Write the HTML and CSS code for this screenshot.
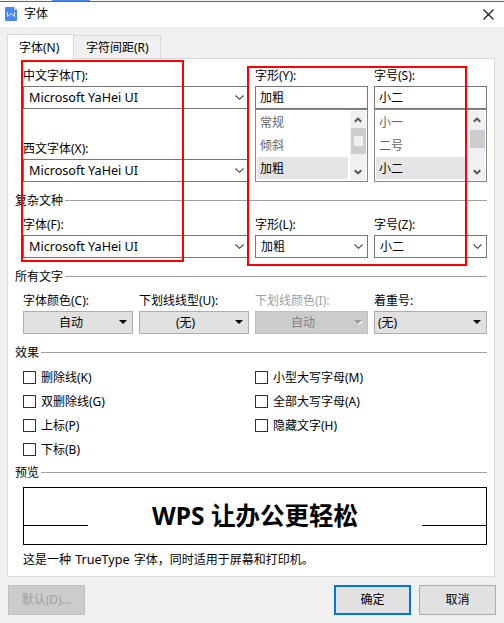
FILE: index.html
```html
<!DOCTYPE html>
<html lang="zh-CN">
<head>
<meta charset="utf-8">
<title>字体</title>
<link rel="stylesheet" href="styles.css">
</head>
<body>
<div class="window">
  <div class="top-edge"><span class="top-accent"></span></div>
  <header class="titlebar">
    <svg class="logo" width="12" height="14" viewBox="0 0 12 14"><path d="M1 0H9L12 3V13Q12 14 11 14H1Q0 14 0 13V1Q0 0 1 0Z" fill="#4a86f0"/><path d="M9 0L12 3H9Z" fill="#b5cffb"/><path d="M2.500 5V9.500L6 6.500L9.500 9.500V5" fill="none" stroke="#dce9ff" stroke-width="1"/></svg>
    <h1>字体</h1>
    <svg class="close" width="11" height="11" viewBox="0 0 11 11"><path d="M.5 .5L10.500 10.500M10.500 .5L.5 10.500" stroke="#111" stroke-width="1.1"/></svg>
  </header>
  <nav class="tabs">
    <span class="tab active">字体(N)</span>
    <span class="tab">字符间距(R)</span>
  </nav>
  <main class="panel">
    <section class="grid">
      <div class="col wide">
        <label>中文字体(T):</label>
        <div class="field font"><span>Microsoft YaHei UI</span><svg class="chev" viewBox="0 0 9 5"><path d="M.5 .5L4.500 4.300L8.500 .5"/></svg></div>
        <label class="second">西文字体(X):</label>
        <div class="field font"><span>Microsoft YaHei UI</span><svg class="chev" viewBox="0 0 9 5"><path d="M.5 .5L4.500 4.300L8.500 .5"/></svg></div>
      </div>
      <div class="col">
        <label>字形(Y):</label>
        <div class="field edit">加粗</div>
        <div class="list">
          <ul><li>常规</li><li>倾斜</li><li class="selected">加粗</li></ul>
          <div class="scroll"><svg class="arrow" viewBox="0 0 8 6"><path d="M.8 4.800L4 1.600L7.200 4.800"/></svg><div class="thumb grip"></div><svg class="arrow down" viewBox="0 0 8 6"><path d="M.8 1.200L4 4.400L7.200 1.200"/></svg></div>
        </div>
      </div>
      <div class="col">
        <label>字号(S):</label>
        <div class="field edit">小二</div>
        <div class="list">
          <ul><li>小一</li><li>二号</li><li class="selected">小二</li></ul>
          <div class="scroll"><svg class="arrow" viewBox="0 0 8 6"><path d="M.8 4.800L4 1.600L7.200 4.800"/></svg><div class="thumb short"></div><svg class="arrow down" viewBox="0 0 8 6"><path d="M.8 1.200L4 4.400L7.200 1.200"/></svg></div>
        </div>
      </div>
    </section>

    <h2>复杂文种</h2>
    <section class="grid">
      <div class="col wide"><label>字体(F):</label><div class="field font"><span>Microsoft YaHei UI</span><svg class="chev" viewBox="0 0 9 5"><path d="M.5 .5L4.500 4.300L8.500 .5"/></svg></div></div>
      <div class="col"><label>字形(L):</label><div class="field"><span>加粗</span><svg class="chev" viewBox="0 0 9 5"><path d="M.5 .5L4.500 4.300L8.500 .5"/></svg></div></div>
      <div class="col"><label>字号(Z):</label><div class="field"><span>小二</span><svg class="chev" viewBox="0 0 9 5"><path d="M.5 .5L4.500 4.300L8.500 .5"/></svg></div></div>
    </section>

    <h2>所有文字</h2>
    <section class="grid">
      <div class="col"><label>字体颜色(C):</label><div class="drop"><span>自动</span><i></i></div></div>
      <div class="col"><label>下划线线型(U):</label><div class="drop none"><span>(无)</span><i></i></div></div>
      <div class="col off"><label>下划线颜色(I):</label><div class="drop"><span>自动</span><i></i></div></div>
      <div class="col"><label>着重号:</label><div class="drop start"><span>(无)</span><i></i></div></div>
    </section>

    <h2>效果</h2>
    <section class="checks">
      <div><p><b></b>删除线(K)</p><p><b></b>双删除线(G)</p><p><b></b>上标(P)</p><p><b></b>下标(B)</p></div>
      <div><p><b></b>小型大写字母(M)</p><p><b></b>全部大写字母(A)</p><p><b></b>隐藏文字(H)</p></div>
    </section>

    <h2>预览</h2>
    <section class="preview"><hr><strong>WPS 让办公更轻松</strong><hr></section>
    <p class="info">这是一种 <span>TrueType</span> 字体，同时适用于屏幕和打印机。</p>
  </main>
  <footer>
    <div class="btn disabled">默认(D)...</div>
    <div class="btn primary">确定</div>
    <div class="btn">取消</div>
  </footer>
  <div class="mark mark-left"></div>
  <div class="mark mark-right"></div>
</div>
</body>
</html>
```
FILE: styles.css
```css
* { box-sizing: border-box; margin: 0; padding: 0; }
body {
  width: 504px; height: 623px; overflow: hidden;
  font: 12px/16px "Noto Sans", "Noto Sans CJK SC", sans-serif;
  color: #000; background: #f0f0f0;
}
.window { position: relative; height: 623px; }
.top-edge { height: 2px; padding-left: 52px; background: #f4f4f4; border-bottom: 1px solid #666; }
.top-accent { display: block; width: 38px; height: 1px; background: #4a86f0; }
.titlebar { display: flex; align-items: center; height: 25px; padding: 0 10px 1px 5px; background: #fff; }
.titlebar h1 { flex: 1; margin-left: 7px; font-size: 12px; font-weight: 400; }
.tabs { display: flex; align-items: flex-end; height: 31px; padding-left: 7px; }
.tab { height: 23px; width: 87px; border: 1px solid #d9d9d9; border-left: 0; border-bottom: 0; padding: 4px 0 0 12px; }
.tab.active { position: relative; width: 67px; height: 25px; margin-bottom: -1px; padding: 5px 0 0 11px; border-left: 1px solid #d9d9d9; background: #fff; }
.panel { width: 488px; height: 519px; margin-left: 7px; padding: 8px 7px 0; border: 1px solid #d9d9d9; background: #fff; }
.grid { display: grid; grid-template-columns: 110px 110px 113px 113px; column-gap: 6px; padding-left: 8px; }
.col { display: flex; flex-direction: column; }
.wide { grid-column: span 2; }
label { height: 16px; margin-bottom: 3px; line-height: 18px; white-space: nowrap; }
.second { margin-top: 31px; }
.field { display: flex; align-items: center; justify-content: space-between; height: 23px; padding: 0 4px 0 5px; border: 1px solid #767676; }
.font { font-size: 12.6px; }
.edit { padding-left: 4px; }
.chev { width: 9px; height: 5px; fill: none; stroke: #444; stroke-width: 1.1; }
.list { display: flex; height: 73px; border: 1px solid #828790; padding: 1px; }
ul { list-style: none; flex: none; width: 91px; margin-right: 2px; color: #666; }
li { height: 23px; padding-left: 3px; line-height: 24px; }
li.selected { height: 22px; line-height: 23px; color: #000; background: #e5e5e5; }
.scroll { display: flex; flex-direction: column; align-items: center; width: 16px; height: 69px; background: #f0f0f0; }
.arrow { width: 8px; height: 6px; margin-top: 6px; fill: none; stroke: #555; stroke-width: 2; flex: none; }
.arrow.down { margin: auto 0 5px; }
.thumb { width: 15px; height: 26px; margin-top: 5px; background: #cdcdcd; }
.grip { border: solid #cdcdcd; border-width: 8px 3px; background: #f0f0f0; }
.short { height: 18px; margin-top: 7px; }
h2 { display: flex; align-items: center; gap: 2px; width: 472px; height: 16px; margin: 11px 0 7px; font-size: 12px; line-height: 18px; font-weight: 400; }
h2::after { content: ""; flex: 1; height: 1px; margin-top: -1px; background: #a0a0a0; }
.drop { display: flex; align-items: center; justify-content: space-between; height: 23px; padding: 0 5px 0 35px; border: 1px solid #adadad; background: #e1e1e1; }
.drop.none { padding-left: 36px; }
.drop.start { padding-left: 3px; }
.drop i { border: solid transparent; border-width: 4px 4px 0; border-top-color: #000; margin-top: -1px; }
.off label { color: #a0a0a0; }
.off .drop { color: #838383; background: #ccc; border-color: #bfbfbf; }
.off .drop i { border-top-color: #999; filter: drop-shadow(1px 1px 0 #fff); }
.checks { display: grid; grid-template-columns: 226px 226px; column-gap: 6px; padding-left: 8px; height: 96px; margin-top: -2px; }
.checks p { display: flex; align-items: center; gap: 5px; height: 24px; }
.checks b { width: 13px; height: 13px; margin-bottom: 1px; border: 1px solid #333; }
.checks + h2 { margin: 3px 0 6px; }
.preview { display: flex; justify-content: space-between; width: 464px; height: 58px; margin-left: 8px; border: 1px solid #000; }
.preview hr { width: 64px; height: 1px; margin-top: 37px; border: 0; background: #000; }
.preview strong { font-size: 24.5px; line-height: 56px; white-space: nowrap; }
.info { margin: 7px 0 0 8px; white-space: nowrap; word-spacing: 1px; }
.info span { font-size: 12.6px; }
footer { display: flex; gap: 8px; padding: 8px 8px 0; }
.btn { width: 77px; height: 30px; border: 1px solid #adadad; background: #e1e1e1; text-align: center; line-height: 28px; }
.btn.primary { border: 2px solid #0078d7; line-height: 26px; }
.btn.disabled { margin-right: auto; color: #a0a0a0; background: #ccc; border-color: #bfbfbf; }
.mark { position: absolute; border: 2px solid #f00; }
.mark-left { left: 21px; top: 60px; width: 163px; height: 202px; }
.mark-right { left: 247px; top: 66px; width: 220px; height: 200px; }
```
